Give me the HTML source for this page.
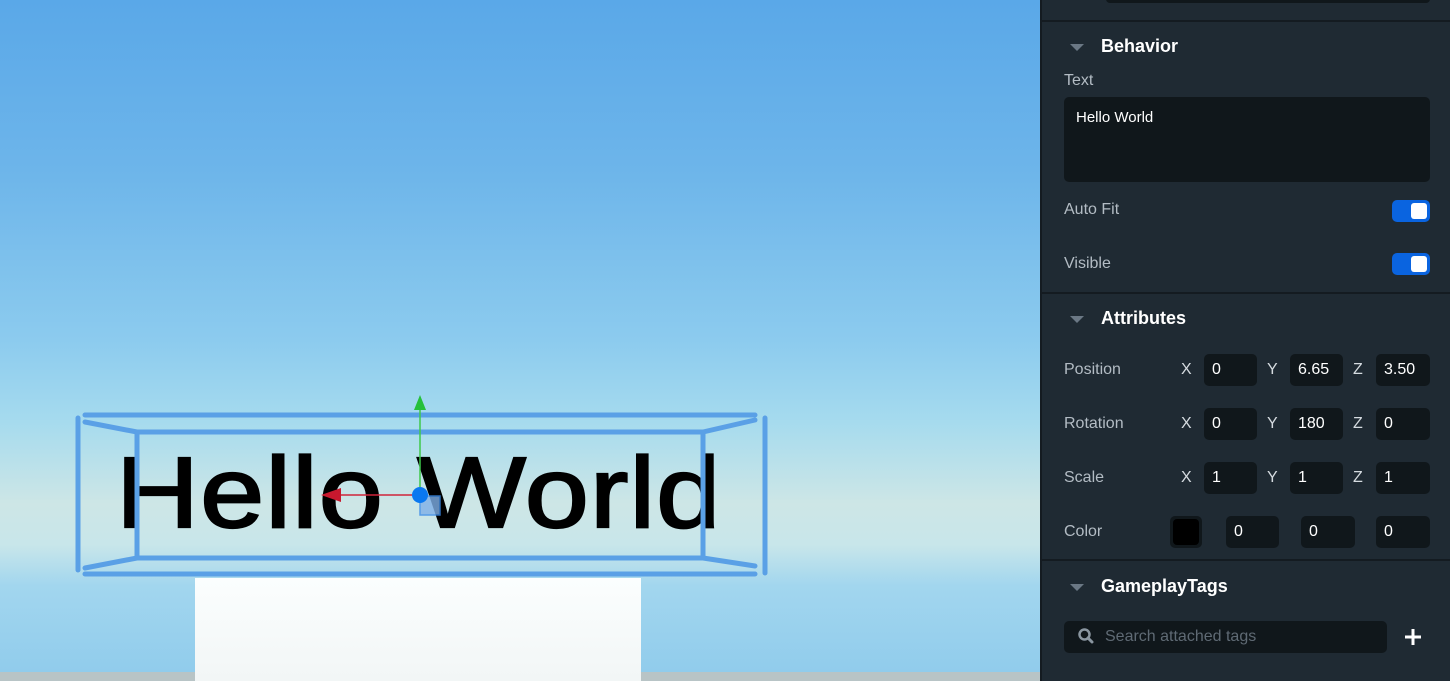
<!DOCTYPE html>
<html><head><meta charset="utf-8"><style>
*{margin:0;padding:0;box-sizing:border-box}
body{width:1450px;height:681px;overflow:hidden;position:relative;font-family:"Liberation Sans",sans-serif}
#scene{position:absolute;left:0;top:0;width:1040px;height:681px;background:linear-gradient(180deg,#5aa8e8 0%,#6db5ea 25%,#8ccbee 50%,#a6dbee 62%,#cde6e6 74%,#c8e6ea 80%,#a2d6ee 86%,#8fcbec 100%)}
#panel{position:absolute;left:1040px;top:0;width:410px;height:681px;background:#1f2a33;color:#fff}
.sep{position:absolute;left:0;width:410px;height:2px;background:#141b21}
.h{position:absolute;left:61px;font-weight:bold;font-size:18px;color:#fff}
.tri{position:absolute;left:30px;width:0;height:0;border-left:7px solid transparent;border-right:7px solid transparent;border-top:7px solid #6b7885}
.lbl{position:absolute;left:24px;font-size:16px;color:#b3bcc4}
.box{position:absolute;background:#10171b;border-radius:5px;font-size:16px;color:#fff;padding-left:8px;line-height:32px;height:32px}
.ax{position:absolute;font-size:16px;color:#d5dbe0}
.tog{position:absolute;left:352px;width:38px;height:22px;background:#0a64e0;border-radius:5px}
.tog::after{content:"";position:absolute;right:3px;top:3px;width:16px;height:16px;background:#fff;border-radius:3px}
</style></head><body>
<div id="scene">
<div style="position:absolute;left:195px;top:578px;width:446px;height:103px;background:linear-gradient(#fbfefe,#f2f6f6)"></div>
<div style="position:absolute;left:0;top:672px;width:195px;height:9px;background:#b8c4c6"></div>
<div style="position:absolute;left:641px;top:672px;width:399px;height:9px;background:#b8c4c6"></div>
<div style="position:absolute;left:116px;top:412px;font-size:115px;color:#000;-webkit-text-stroke:2.5px #000;line-height:150px;white-space:nowrap;letter-spacing:1.2px;transform:scaleY(0.87);transform-origin:0 123px">Hello World</div>
<svg style="position:absolute;left:0;top:0" width="1040" height="681">
<g stroke="#5aa0e6" stroke-width="5" fill="none" stroke-linecap="round">
<line x1="85" y1="415" x2="755" y2="415"/>
<line x1="78" y1="418" x2="78" y2="570"/>
<line x1="765" y1="418" x2="765" y2="573"/>
<line x1="85" y1="574" x2="755" y2="574"/>
<line x1="137" y1="432" x2="703" y2="432"/>
<line x1="137" y1="558" x2="703" y2="558"/>
<line x1="137" y1="432" x2="137" y2="558"/>
<line x1="703" y1="432" x2="703" y2="558"/>
<line x1="85" y1="422" x2="137" y2="432"/>
<line x1="755" y1="420" x2="703" y2="432"/>
<line x1="85" y1="568" x2="137" y2="558"/>
<line x1="755" y1="566" x2="703" y2="558"/>
</g>
<line x1="420" y1="405" x2="420" y2="495" stroke="#3ec84a" stroke-width="1.5"/>
<polygon points="420,395 414,410 426,410" fill="#25c03a"/>
<line x1="335" y1="495" x2="420" y2="495" stroke="#d0243a" stroke-width="1.5"/>
<polygon points="321,495 341,488 341,502" fill="#c8182e"/>
<rect x="420" y="496" width="20" height="19" fill="#7fb0e8" stroke="#3a8ae8" stroke-width="1.5" opacity="0.8"/>
<circle cx="420" cy="495" r="8" fill="#0a78f0"/>
</svg>
</div>
<div id="panel">
<div style="position:absolute;left:0;top:0;width:2px;height:681px;background:#141b21"></div>
<div style="position:absolute;left:66px;top:-6px;width:324px;height:9px;background:#10171b;border-radius:4px"></div>
<div class="sep" style="top:20px"></div>
<div class="tri" style="top:44px"></div><div class="h" style="top:36px">Behavior</div>
<div class="lbl" style="top:72px">Text</div>
<div class="box" style="left:24px;top:97px;width:366px;height:85px;padding:10px 12px;line-height:22px;font-size:15px">Hello World</div>
<div class="lbl" style="top:201px">Auto Fit</div><div class="tog" style="top:200px"></div>
<div class="lbl" style="top:255px">Visible</div><div class="tog" style="top:253px"></div>
<div class="sep" style="top:292px"></div>
<div class="tri" style="top:316px"></div><div class="h" style="top:308px">Attributes</div>
<div class="lbl" style="top:361px">Position</div>
<div class="ax" style="left:141px;top:361px">X</div><div class="box" style="left:164px;top:354px;width:53px">0</div>
<div class="ax" style="left:227px;top:361px">Y</div><div class="box" style="left:250px;top:354px;width:53px">6.65</div>
<div class="ax" style="left:313px;top:361px">Z</div><div class="box" style="left:336px;top:354px;width:54px">3.50</div>
<div class="lbl" style="top:415px">Rotation</div>
<div class="ax" style="left:141px;top:415px">X</div><div class="box" style="left:164px;top:408px;width:53px">0</div>
<div class="ax" style="left:227px;top:415px">Y</div><div class="box" style="left:250px;top:408px;width:53px">180</div>
<div class="ax" style="left:313px;top:415px">Z</div><div class="box" style="left:336px;top:408px;width:54px">0</div>
<div class="lbl" style="top:469px">Scale</div>
<div class="ax" style="left:141px;top:469px">X</div><div class="box" style="left:164px;top:462px;width:53px">1</div>
<div class="ax" style="left:227px;top:469px">Y</div><div class="box" style="left:250px;top:462px;width:53px">1</div>
<div class="ax" style="left:313px;top:469px">Z</div><div class="box" style="left:336px;top:462px;width:54px">1</div>
<div class="lbl" style="top:523px">Color</div>
<div style="position:absolute;left:130px;top:516px;width:32px;height:32px;background:#10171b;border-radius:5px"><div style="margin:3px;width:26px;height:26px;background:#000;border-radius:4px"></div></div>
<div class="box" style="left:186px;top:516px;width:53px">0</div>
<div class="box" style="left:261px;top:516px;width:54px">0</div>
<div class="box" style="left:336px;top:516px;width:54px">0</div>
<div class="sep" style="top:559px"></div>
<div class="tri" style="top:584px"></div><div class="h" style="top:576px">GameplayTags</div>
<div class="box" style="left:24px;top:621px;width:323px;height:32px;color:#5f6a74;padding-left:41px">Search attached tags</div>
<svg style="position:absolute;left:37px;top:627px" width="20" height="20"><circle cx="7.5" cy="7.5" r="5" stroke="#8a96a0" stroke-width="2.5" fill="none"/><line x1="11" y1="11" x2="15" y2="15" stroke="#8a96a0" stroke-width="3" stroke-linecap="round"/></svg>
<svg style="position:absolute;left:364px;top:628px" width="18" height="18"><path d="M9 1V17M1 9H17" stroke="#fff" stroke-width="3"/></svg>
</div>
</body></html>
